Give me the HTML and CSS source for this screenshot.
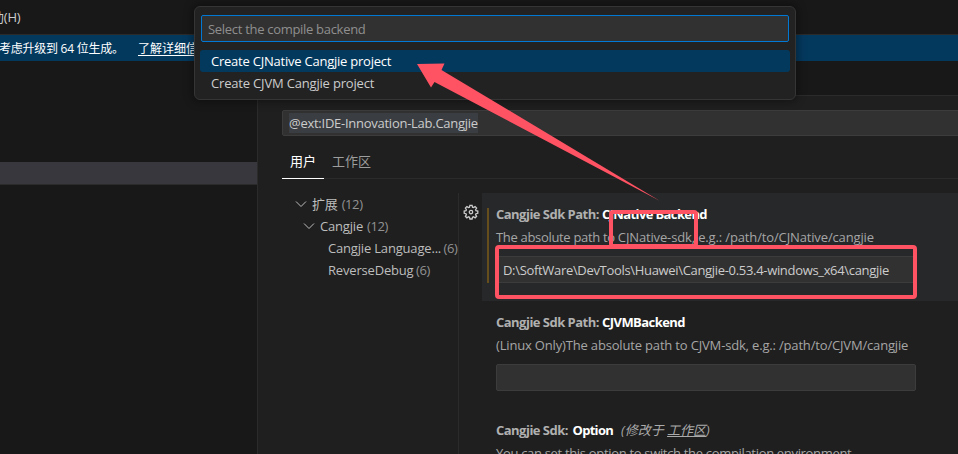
FILE: index.html
```
<!DOCTYPE html>
<html lang="zh-CN">
<head>
<meta charset="utf-8">
<title>Settings</title>
<link rel="stylesheet" href="styles.css">
</head>
<body>
<div class="window">
  <header class="menubar"><span class="menu-item">助(H)</span></header>
  <div class="banner"><span class="banner-text">考虑升级到 64 位生成。</span><a class="banner-link">了解详细信息</a></div>
  <div class="workbench">
    <aside class="sidebar"><div class="side-row"></div></aside>
    <main class="editor">
      <div class="editor-tabs"></div>
      <div class="search"><span class="search-text">@ext:IDE-Innovation-Lab.Cangjie</span></div>
      <nav class="scopes"><span class="scope active">用户</span><span class="scope">工作区</span></nav>
      <div class="settings">
        <div class="toc">
          <div class="toc-row"><svg class="chev" viewBox="0 0 12 12"><path d="M1 3.5 6 8.5 11 3.5"/></svg><span class="toc-cjk">扩展</span><span class="count c1">(12)</span></div>
          <div class="toc-row level2"><svg class="chev" viewBox="0 0 12 12"><path d="M1 3.5 6 8.5 11 3.5"/></svg><span class="t-cangjie">Cangjie</span><span class="count c1">(12)</span></div>
          <div class="toc-row level3"><span class="t-lang">Cangjie Language...</span><span class="count c2">(6)</span></div>
          <div class="toc-row level3"><span class="t-debug">ReverseDebug</span><span class="count c2">(6)</span></div>
        </div>
        <div class="list">
          <section class="setting focused">
            <svg class="gear" viewBox="0 0 16 16"><path d="M6.9 1.3h2.2l.4 1.9 1 .4 1.6-1 1.5 1.5-1 1.6.4 1 1.8.4v2.2l-1.8.4-.4 1 1 1.6-1.5 1.5-1.6-1-1 .4-.4 1.8H6.9l-.4-1.8-1-.4-1.6 1-1.5-1.5 1-1.6-.4-1-1.8-.4V7.1l1.8-.4.4-1-1-1.6 1.5-1.5 1.6 1 1-.4z"/><circle cx="8" cy="8.1" r="1.700"/></svg>
            <div class="mod"></div>
            <div class="body">
              <div class="title"><span class="cat">Cangjie Sdk Path:</span><span class="key k1">CJNative Backend</span></div>
              <div class="desc"><span class="d1a">The absolute path to </span><span class="d1b">CJNative-sdk, e.g.: /path/to/CJNative/cangjie</span></div>
              <div class="input"><span class="val">D:\SoftWare\DevTools\Huawei\Cangjie-0.53.4-windows_x64\cangjie</span></div>
            </div>
          </section>
          <section class="setting">
            <div class="body">
              <div class="title"><span class="cat">Cangjie Sdk Path:</span><span class="key k2">CJVMBackend</span></div>
              <div class="desc"><span class="d2">(Linux Only)The absolute path to CJVM-sdk, e.g.: /path/to/CJVM/cangjie</span></div>
              <div class="input"></div>
            </div>
          </section>
          <section class="setting">
            <div class="body">
              <div class="title"><span class="cat cat3">Cangjie Sdk:</span><span class="key k3">Option</span><span class="scope-note">(修改于 <u>工作区</u>)</span></div>
              <div class="desc"><span class="d3">You can set this option to switch the compilation environment</span></div>
            </div>
          </section>
        </div>
      </div>
    </main>
  </div>
  <div class="picker">
    <div class="picker-input"><span class="p0">Select the compile backend</span></div>
    <div class="picker-row selected"><span class="p1">Create CJNative Cangjie project</span></div>
    <div class="picker-row"><span class="p2">Create CJVM Cangjie project</span></div>
  </div>
  <svg class="marks" viewBox="0 0 958 454">
    <rect x="611" y="212" width="85" height="34" rx="2"/>
    <rect x="497" y="247" width="418" height="50" rx="2"/>
    <path d="M417 64 444.5 63.5 441.5 70 660 201 434.5 82 431 87.5Z"/>
  </svg>
</div>
</body>
</html>
```
FILE: styles.css
```
* { box-sizing: border-box; }
body {
  margin: 0;
  background: #181818;
  color: #ccc;
  font: 13px/22px "Open Sans", "Noto Sans CJK SC", sans-serif;
}
.window {
  position: relative;
  width: 958px;
  height: 454px;
  overflow: hidden;
  display: flex;
  flex-direction: column;
  white-space: nowrap;
}
.menubar { height: 34px; flex: none; padding-top: 6px; }
.menu-item { display: block; margin-left: -9px; font-size: 13px; letter-spacing: -.2px; }
.banner {
  height: 27px;
  flex: none;
  display: flex;
  gap: 17px;
  border-top: 1px solid #2b2b2b;
  background: #04395e;
  color: #fff;
  font-size: 12px;
  line-height: 27px;
}
.banner-text { width: 121px; margin-left: -1px; margin-right: 1px; letter-spacing: -.25px; }
.banner-link { text-decoration: underline; text-underline-offset: 2px; }
.workbench { flex: 1; display: flex; min-height: 0; }
.sidebar { width: 258px; flex: none; border-right: 1px solid #2b2b2b; padding-top: 101px; }
.side-row { height: 23px; background: #37373d; border-bottom: 1px solid #2b2b2b; }
.editor { flex: 1; min-width: 0; background: #1f1f1f; display: flex; flex-direction: column; }
.editor-tabs { height: 35px; flex: none; background: #181818; border-bottom: 1px solid #2b2b2b; }
.search {
  height: 26px;
  flex: none;
  margin: 14px -4px 0 24px;
  border: 1px solid #3c3c3c;
  border-radius: 2px;
  background: #313131;
  padding: 2px 6px;
}
.search-text { display: block; width: 189px; height: 20px; line-height: 20px; background: #3a3d41; letter-spacing: -.26px; }
.scopes {
  height: 43px;
  flex: none;
  margin-left: 24px;
  display: flex;
  border-bottom: 1px solid #2b2b2b;
  padding-top: 9px;
}
.scope { height: 34px; line-height: 32px; padding: 0 8px; color: #9d9d9d; }
.scope.active { width: 42px; color: #fff; border-bottom: 1px solid #fff; }
.settings { flex: 1; min-height: 0; display: flex; padding-top: 14px; }
.toc { width: 201px; flex: none; border-right: 1px solid #2b2b2b; padding-left: 37px; }
.toc-row { height: 22px; display: flex; align-items: center; color: #bdbdbd; letter-spacing: -.18px; }
.level2 { padding-left: 8px; }
.level3 { padding-left: 33px; }
.chev { width: 12px; height: 12px; flex: none; margin-right: 5px; fill: none; stroke: #bdbdbd; }
.count { margin-left: 4px; color: #929292; letter-spacing: -.4px; }
.c2 { margin-left: 2.5px; }
.list { flex: 1; min-width: 0; }
.setting { height: 108px; display: flex; padding-left: 37px; }
.setting.focused {
  padding-left: 4px;
  background: linear-gradient(90deg, #1f1f1f 23px, #26282a 23px);
}
.gear { width: 16px; height: 16px; flex: none; margin-top: 11px; fill: none; stroke: #ccc; stroke-width: 1.3; }
.mod { width: 2px; height: 75px; flex: none; margin: 15px 7px 0 8px; background: #664e1c; }
.body { width: 420px; padding-top: 10px; }
.title { height: 23px; display: flex; font-weight: 700; }
.cat { width: 106px; color: #b0b0b0; letter-spacing: -.52px; }
.cat3 { width: 76.5px; }
.key { color: #fff; }
.k1 { letter-spacing: -.62px; }
.k2 { letter-spacing: -.55px; }
.k3 { width: 41.5px; letter-spacing: -.7px; }
.scope-note { margin-left: 7px; font-weight: 400; font-style: italic; color: #aaa; }
.desc { height: 23px; color: #a6a6a6; white-space: pre; }
.d1a { letter-spacing: -.32px; }
.d1b { letter-spacing: -.14px; }
.d2 { letter-spacing: -.17px; }
.d3 { letter-spacing: -.32px; }
.val { letter-spacing: -.32px; }
.input {
  height: 27px;
  margin-top: 7px;
  padding-left: 6px;
  border: 1px solid #3c3c3c;
  border-radius: 2px;
  background: #313131;
  line-height: 27px;
}
.picker {
  position: absolute;
  left: 194px;
  top: 6px;
  width: 602px;
  height: 94px;
  padding: 8px 5px 0;
  border: 1px solid #353535;
  border-radius: 6px;
  background: #222;
  box-shadow: 0 0 8px 2px rgba(0, 0, 0, .36);
}
.picker-input {
  height: 27px;
  margin: 0 1px 8px;
  padding-left: 6px;
  border: 1px solid #0078d4;
  border-radius: 2px;
  background: #313131;
  color: #8f8f8f;
  line-height: 27px;
}
.p0 { letter-spacing: -.3px; }
.p1 { letter-spacing: -.23px; }
.p2 { letter-spacing: -.18px; }
.picker-row { height: 22px; padding-left: 11px; border-radius: 3px; }
.picker-row.selected { background: #04395e; color: #fff; }
.marks { position: absolute; left: 0; top: 0; width: 958px; height: 454px; }
.marks rect { fill: none; stroke: #ff5263; stroke-width: 4; }
.marks path { fill: #ff5263; }
```
